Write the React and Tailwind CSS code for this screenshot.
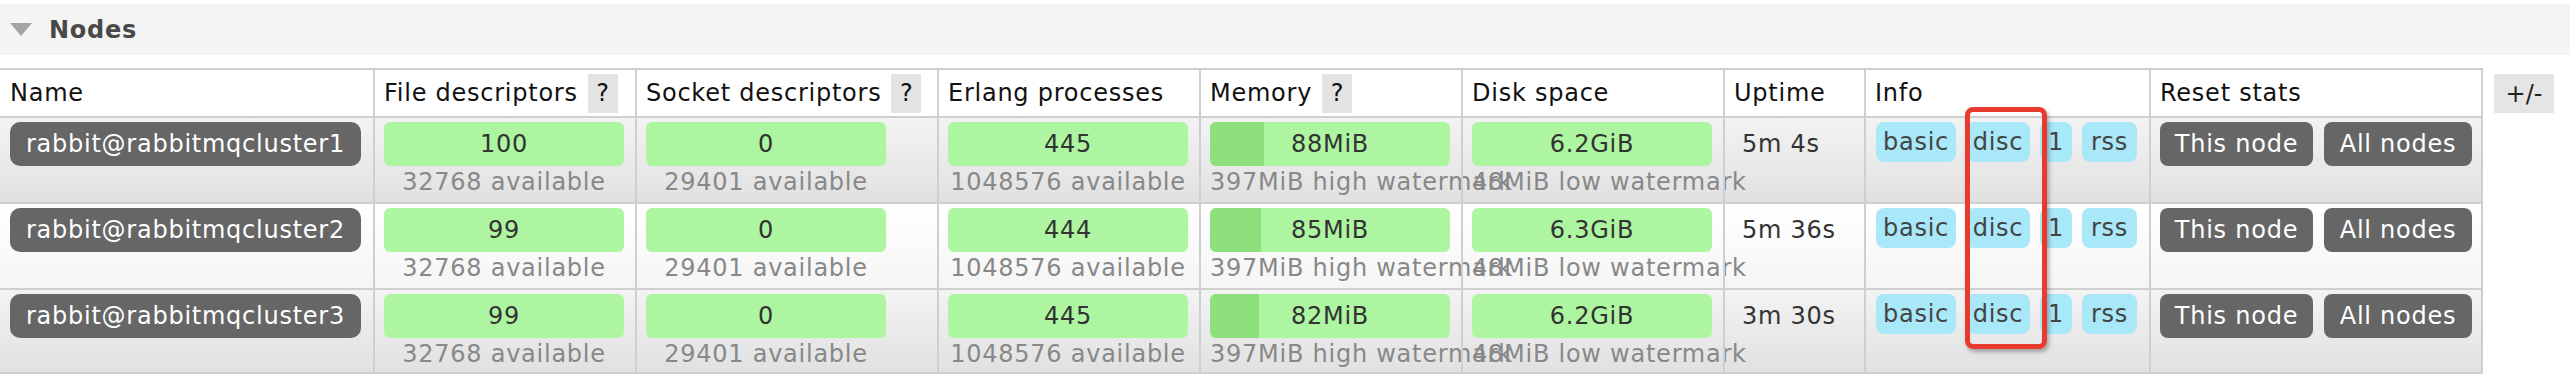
import React from "react";

const cols =
  "grid grid-cols-[373px_262px_302px_262px_262px_262px_141px_285px_334px]";

const nodes = [
  { name: "rabbit@rabbitmqcluster1", fd: "100", sd: "0", ep: "445", mem: "88MiB", memW: "w-[54px]", disk: "6.2GiB", up: "5m 4s", alt: true },
  { name: "rabbit@rabbitmqcluster2", fd: "99", sd: "0", ep: "444", mem: "85MiB", memW: "w-[51px]", disk: "6.3GiB", up: "5m 36s", alt: false },
  { name: "rabbit@rabbitmqcluster3", fd: "99", sd: "0", ep: "445", mem: "82MiB", memW: "w-[49px]", disk: "6.2GiB", up: "3m 30s", alt: true },
];

function Help() {
  return (
    <span className="ml-[10px] w-[30px] h-[39px] bg-[#e3e3e3] flex items-center justify-center tracking-normal">
      ?
    </span>
  );
}

function HeadCell({ children, first }) {
  return (
    <div
      className={`h-[46px] flex items-center whitespace-nowrap ${
        first ? "pl-[10px]" : "pl-[9px] border-l-2 border-[#cfcfcf]"
      }`}
    >
      {children}
    </div>
  );
}

function Bar({ value, sub, dark }) {
  return (
    <div className="w-[240px]">
      <div className="relative h-[44px] rounded-[6px] bg-[#adf5a0] overflow-hidden flex items-center justify-center text-[#333]">
        {dark && <div className={`absolute left-0 top-0 h-full bg-[#8ee07c] ${dark}`} />}
        <span className="relative">{value}</span>
      </div>
      <div className="mt-[2px] text-center whitespace-nowrap text-[#888]">{sub}</div>
    </div>
  );
}

function Cell({ children, className = "" }) {
  return (
    <div className={`border-l-2 border-[#cfcfcf] pt-[4px] pl-[9px] ${className}`}>
      {children}
    </div>
  );
}

function Badge({ children, w }) {
  return (
    <span className={`h-[40px] ${w} rounded-[8px] bg-[#a9e8f9] text-[#444] flex items-center justify-center`}>
      {children}
    </span>
  );
}

function DarkButton({ children, w }) {
  return (
    <span className={`h-[44px] ${w} rounded-[8px] bg-[#666] text-white flex items-center justify-center`}>
      {children}
    </span>
  );
}

export default function App() {
  return (
    <div className="relative w-[2570px] h-[384px] overflow-hidden bg-white font-['DejaVu_Sans',sans-serif] text-[24px] leading-[28px] tracking-[0.75px] text-[#111]">
      <div className="pt-[4px]">
        <div className="h-[51px] bg-[#f4f4f4] flex items-center">
          <svg className="ml-[10px]" width="22" height="13" viewBox="0 0 22 13">
            <polygon points="0,0 22,0 11,13" fill="#a3a3a3" />
          </svg>
          <h2 className="ml-[17px] font-bold text-[#484848]">Nodes</h2>
        </div>
      </div>

      <div className="mt-[13px] flex items-start">
        <div className="w-[2483px] border-r-2 border-[#cfcfcf]">
          <div className={`${cols} border-t-2 border-[#cfcfcf] bg-white`}>
            <HeadCell first>Name</HeadCell>
            <HeadCell>
              File descriptors <Help />
            </HeadCell>
            <HeadCell>
              Socket descriptors <Help />
            </HeadCell>
            <HeadCell>Erlang processes</HeadCell>
            <HeadCell>
              Memory <Help />
            </HeadCell>
            <HeadCell>Disk space</HeadCell>
            <HeadCell>Uptime</HeadCell>
            <HeadCell>Info</HeadCell>
            <HeadCell>Reset stats</HeadCell>
          </div>

          {nodes.map((n, i) => (
            <div
              key={n.name}
              className={`${cols} h-[86px] border-t-2 border-[#cfcfcf] ${
                i === nodes.length - 1 ? "border-b-2" : ""
              } ${
                n.alt
                  ? "bg-linear-to-b from-[#f3f3f3] to-[#e1e1e1]"
                  : "bg-linear-to-b from-[#ffffff] to-[#f5f5f5]"
              }`}
            >
              <div className="pt-[4px] pl-[10px]">
                <span className="h-[44px] w-[351px] rounded-[10px] bg-[#666] text-white flex items-center justify-center whitespace-nowrap">
                  {n.name}
                </span>
              </div>
              <Cell>
                <Bar value={n.fd} sub="32768 available" />
              </Cell>
              <Cell>
                <Bar value={n.sd} sub="29401 available" />
              </Cell>
              <Cell>
                <Bar value={n.ep} sub="1048576 available" />
              </Cell>
              <Cell>
                <Bar value={n.mem} sub="397MiB high watermark" dark={n.memW} />
              </Cell>
              <Cell>
                <Bar value={n.disk} sub="48MiB low watermark" />
              </Cell>
              <Cell className="!pl-[17px]">
                <div className="h-[44px] flex items-center whitespace-nowrap text-[#333]">{n.up}</div>
              </Cell>
              <Cell className="!pl-[10px]">
                <div className="flex gap-[10px]">
                  <Badge w="w-[80px]">basic</Badge>
                  <Badge w="w-[64px]">disc</Badge>
                  <Badge w="w-[32px]">1</Badge>
                  <Badge w="w-[55px]">rss</Badge>
                </div>
              </Cell>
              <Cell>
                <div className="flex gap-[11px] whitespace-nowrap">
                  <DarkButton w="w-[153px]">This node</DarkButton>
                  <DarkButton w="w-[148px]">All nodes</DarkButton>
                </div>
              </Cell>
            </div>
          ))}
        </div>

        <span className="ml-[11px] mt-[6px] w-[60px] h-[39px] bg-[#e5e5e5] flex items-center justify-center tracking-normal text-[#222]">
          +/-
        </span>
      </div>

      <div className="absolute left-[1965px] top-[107px] w-[82px] h-[242px] rounded-[8px] border-[5px] border-[#e63b2e] shadow-[2px_3px_4px_rgba(0,0,0,0.3)]" />
    </div>
  );
}
